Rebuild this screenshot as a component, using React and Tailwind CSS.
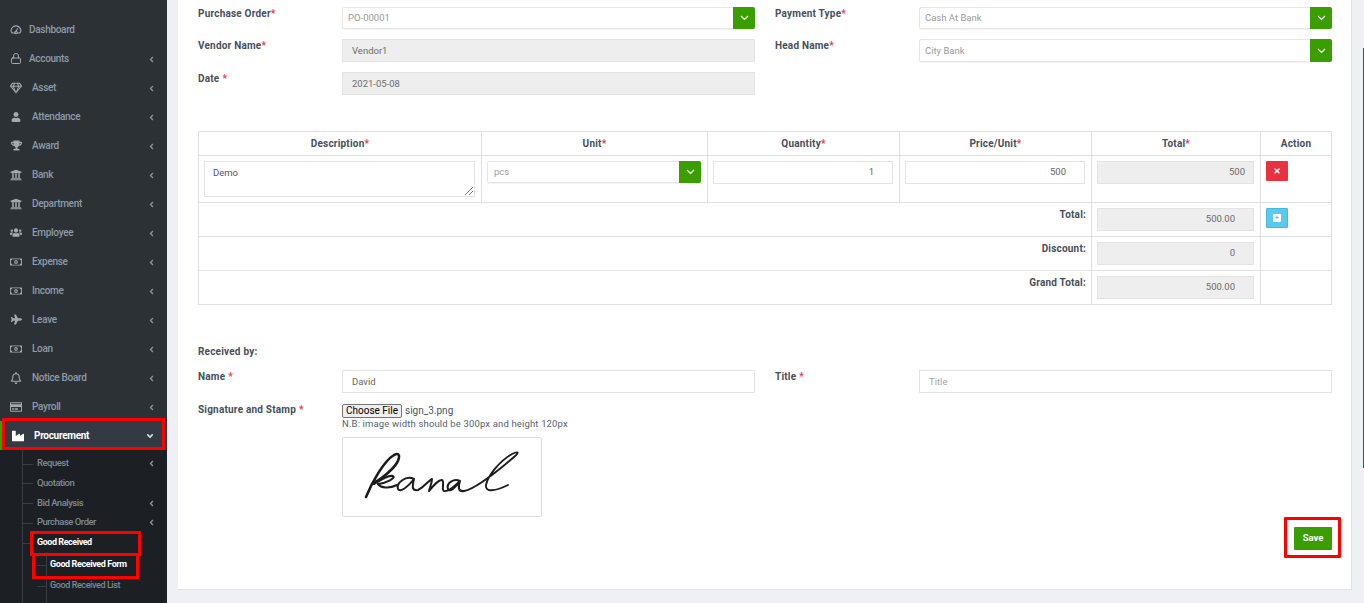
import React from "react";
import { FaRegGem, FaUser, FaTrophy, FaUniversity, FaUsers, FaRegMoneyBillAlt, FaPlane, FaRegBell, FaRegCreditCard, FaIndustry, FaAngleLeft, FaAngleDown, FaTimes } from "react-icons/fa";
import { LuLock } from "react-icons/lu";

const FONT = "font-['Roboto','Liberation_Sans',sans-serif]";

const Gauge = ({ size }) => (
  <svg width={size} height={size} viewBox="0 0 14 14" fill="none" stroke="currentColor" strokeWidth="1.3" strokeLinecap="round">
    <path d="M2.5 10.5C.6 8.6 1 5.2 3.2 3.6 5.4 2 8.8 2.2 10.8 3.8 13 5.6 13.4 8.6 11.5 10.5H8.6M5.4 10.5H2.5" />
    <path d="M6.2 9.6 8.8 5.6M7 11.2a1.4 1.4 0 1 0 0-2.8 1.4 1.4 0 0 0 0 2.8Z" />
  </svg>
);

const menu = [
  ["Dashboard", Gauge, 29, false, 12],
  ["Accounts", LuLock, 29, true, 13],
  ["Asset", FaRegGem, 32, true, 12],
  ["Attendance", FaUser, 32, true, 10],
  ["Award", FaTrophy, 32, true, 11],
  ["Bank", FaUniversity, 32, true, 12],
  ["Department", FaUniversity, 32, true, 12],
  ["Employee", FaUsers, 32, true, 13],
  ["Expense", FaRegMoneyBillAlt, 32, true, 12],
  ["Income", FaRegMoneyBillAlt, 32, true, 12],
  ["Leave", FaPlane, 32, true, 11],
  ["Loan", FaRegMoneyBillAlt, 32, true, 12],
  ["Notice Board", FaRegBell, 32, true, 12],
  ["Payroll", FaRegCreditCard, 32, true, 12],
];

function MenuItem({ label, Icon, textLeft, arrow, size }) {
  return (
    <div className="flex h-[29px] items-center pl-[10px] pr-[11px] text-[10px] font-medium tracking-[-0.3px] text-[#8d9ba8]">
      <span className="flex w-[12px] justify-center text-[#a3a9ae]"><Icon size={size} /></span>
      <span style={{ marginLeft: textLeft - 22 }}>{label}</span>
      {arrow && <FaAngleLeft size={9} className="ml-auto mt-[2px] text-[#8a949c]" />}
    </div>
  );
}

function SubItem({ label, arrow, active, h, nested, box, textCls = "text-[9.5px] tracking-[-0.5px]" }) {
  return (
    <div className={`relative flex items-center ${h} ${nested ? "pl-[50px]" : "pl-[37px]"} pr-[11px] ${textCls} ${active ? "font-bold text-white" : "font-medium text-[#7d8a96]"}`}>
      <span className={`absolute top-1/2 h-px bg-[#383d42] ${nested ? "left-[37px] w-[9px]" : "left-[23px] w-[10px]"}`} />
      {label}
      {arrow && <FaAngleLeft size={9} className="ml-auto text-[#8a949c]" />}
      {box}
    </div>
  );
}

function Sidebar() {
  return (
    <aside className="h-[603px] w-[167px] shrink-0 overflow-hidden bg-[#2c3136]">
      <div className="pt-[15px]">
        {menu.map(([l, I, t, a, s]) => <MenuItem key={l} label={l} Icon={I} textLeft={t} arrow={a} size={s} />)}
      </div>
      <div className="relative flex h-[29px] items-center border-l-[2px] border-[#3aa000] bg-[#343a43] pl-[10px] pr-[12px] text-[10px] font-bold tracking-[-0.3px] text-white">
        <FaIndustry size={12} />
        <span className="ml-[10px]">Procurement</span>
        <FaAngleDown size={10} className="ml-auto text-[#d8dde0]" />
        <span className="absolute -top-[3px] left-0 h-[32px] w-[163px] border-[3px] border-[#ff0000]" />
      </div>
      <div className="relative h-[153px] bg-[#1c2024] pt-[4px]">
        <span className="absolute bottom-0 left-[22px] top-0 w-px bg-[#383d42]" />
        <span className="absolute bottom-0 left-[46px] top-[102px] w-px bg-[#383d42]" />
        <SubItem label="Request" arrow h="h-[19px]" />
        <SubItem label="Quotation" h="h-[20px]" />
        <SubItem label="Bid Analysis" arrow h="h-[20px]" />
        <SubItem label="Purchase Order" arrow h="h-[19px]" />
        <SubItem label="Good Received" active h="h-[21px]" textCls="text-[9px] tracking-[-0.45px]"
          box={<span className="absolute -top-[1px] left-[30px] h-[25px] w-[111px] border-[3px] border-[#ff0000]" />} />
        <SubItem label="Good Received Form" active nested h="h-[24px]" textCls="text-[9px] tracking-[-0.4px]"
          box={<span className="absolute left-[32px] top-0 h-[26px] w-[107px] border-[3px] border-[#ff0000]" />} />
        <SubItem label="Good Received List" nested h="h-[17px]" textCls="text-[9px] tracking-[-0.4px]" />
      </div>
    </aside>
  );
}

const Star = ({ gap }) => <span className={`text-[#e8374a] ${gap ? "ml-[3px]" : ""}`}>*</span>;

function Label({ text, gap, w = "w-[144px]" }) {
  return (
    <div className={`${w} shrink-0 text-[10px] font-bold leading-[14px] tracking-[0.2px] text-[#454f5b]`}>
      {text}<Star gap={gap} />
    </div>
  );
}

function Select({ value, cls = "h-[22px]", textCls = "pl-[5px]" }) {
  return (
    <div className={`flex ${cls} flex-1 items-stretch rounded-[2px] border border-[#e6e6e6] bg-white shadow-[0_1px_1px_rgba(0,0,0,0.05)]`}>
      <span className={`flex flex-1 items-center pt-px ${textCls} text-[9.5px] text-[#9a9a9a]`}>{value}</span>
      <span className="-my-px -mr-px flex w-[22px] items-center justify-center rounded-r-[2px] bg-[#3a9d00] text-white">
        <svg width="9" height="6" viewBox="0 0 9 6" fill="none" stroke="currentColor" strokeWidth="1.2"><path d="M1 1l3.5 3.5L8 1" /></svg>
      </span>
    </div>
  );
}

function Field({ value, disabled, align = "left", cls = "", placeholder }) {
  return (
    <div className={`flex h-[23px] items-center border border-[#e3e3e3] text-[9.5px] ${disabled ? "bg-[#eeeeee] text-[#6b6b6b]" : "bg-white text-[#666]"} ${align === "right" ? "justify-end pr-[18px]" : "pl-[9px] pt-px"} ${cls}`}>
      {value}{placeholder && <span className="text-[#a5a5a5]">{placeholder}</span>}
    </div>
  );
}

const th = "border border-[#dfdfdf] text-center text-[10px] font-bold text-[#454f5b] tracking-[0.2px] align-middle h-[24px] p-0";
const td = "border border-[#dfdfdf] pl-[5px] pr-[6px] pt-[5px] pb-[4px] align-top";

function Table() {
  const sumRow = (label, value, action) => (
    <tr key={label} className="h-[34px]">
      <td colSpan={4} className="border border-[#dfdfdf] pr-[5px] pt-[4px] text-right align-top text-[10px] font-bold tracking-[0.2px] text-[#454f5b]">{label}</td>
      <td className={td}><Field value={value} disabled align="right" cls="h-[23px]" /></td>
      <td className={td}>{action}</td>
    </tr>
  );
  return (
    <table className="mt-[36px] w-[1133px] table-fixed border-collapse">
      <colgroup>
        <col className="w-[283px]" /><col className="w-[226px]" /><col className="w-[192px]" /><col className="w-[192px]" /><col className="w-[169px]" /><col className="w-[71px]" />
      </colgroup>
      <thead>
        <tr>
          {["Description", "Unit", "Quantity", "Price/Unit", "Total"].map((t) => (
            <th key={t} className={th}>{t}<Star /></th>
          ))}
          <th className={th}>Action</th>
        </tr>
      </thead>
      <tbody>
        <tr className="h-[47px]">
          <td className={td}>
            <div className="relative h-[36px] border border-[#e3e3e3] pl-[8px] pt-[4px] text-[9.5px] text-[#555]">
              Demo
              <svg viewBox="0 0 8 8" className="absolute bottom-px right-px h-[8px] w-[8px]" stroke="#555" strokeWidth="0.8"><path d="M0 8 8 0M4 8 8 4" /></svg>
            </div>
          </td>
          <td className={td}><Select value="pcs" textCls="pl-[6px]" /></td>
          <td className={td}><Field value="1" align="right" cls="h-[22px]" /></td>
          <td className={td}><Field value="500" align="right" cls="h-[22px]" /></td>
          <td className={td}><Field value="500" disabled align="right" cls="h-[22px] !pr-[8px]" /></td>
          <td className={td}>
            <span className="flex h-[20px] w-[22px] items-center justify-center rounded-[1px] bg-[#e8323f] text-white"><FaTimes size={8} /></span>
          </td>
        </tr>
        {sumRow("Total:", "500.00", (
          <span className="flex h-[20px] w-[22px] items-center justify-center rounded-[1px] border border-[#46b8da] bg-[#5bc8ee] text-white">
            <span className="flex h-[8px] w-[8px] items-center justify-center rounded-[1px] bg-white text-[7px] font-bold leading-none text-[#5bc8ee]">+</span>
          </span>
        ))}
        {sumRow("Discount:", "0")}
        {sumRow("Grand Total:", "500.00")}
      </tbody>
    </table>
  );
}

function Signature() {
  return (
    <div className="mt-[7px] h-[80px] w-[200px] rounded-[2px] border border-[#dcdcdc] bg-white">
      <svg viewBox="0 0 198 78" className="h-[78px] w-[198px] blur-[0.4px]" fill="none" stroke="#1c1c1c" strokeLinecap="round" strokeLinejoin="round" role="img" aria-label="Signature image">
        <path strokeWidth="2.6" d="M23 59C29 44 41 23 51 17C59 13 57 23 49 31C43 37 35 43 29 46" />
        <path strokeWidth="2.1" d="M31 46C38 42 44 37 50 38C53 40 44 45 35 46C38 50 46 51 54 47" />
        <path strokeWidth="2" d="M71 41C63 37 53 45 55 51C57 55 65 49 71 41C69 49 69 53 75 52C81 49 85 43 89 41C89 45 87 49 86 53C91 47 95 42 99 42C102 43 98 51 101 53C105 54 111 49 117 43C111 40 103 45 105 51C107 55 113 49 117 43C115 49 115 54 121 53" />
        <path strokeWidth="1.9" d="M121 53C133 51 157 31 171 19C177 14 175 13 169 16C157 23 145 37 143 47C142 55 153 53 165 47" />
      </svg>
    </div>
  );
}

export default function App() {
  return (
    <div className={`flex h-[603px] w-[1364px] overflow-hidden bg-[#eef0f6] ${FONT}`}>
      <Sidebar />
      <main className="relative ml-[11px] h-[590px] w-[1174px] shrink-0 border-b border-r border-[#e0e2ec] bg-white pl-[20px] pr-[19px] pt-[7px]">
        <div className="flex gap-[20px]">
          <div className="flex w-[557px] flex-col">
            <div className="flex items-start"><Label text="Purchase Order" /><Select value="PO-00001" /></div>
            <div className="mt-[10px] flex items-start"><Label text="Vendor Name" /><Field value="Vendor1" disabled cls="flex-1" /></div>
            <div className="mt-[10px] flex items-start"><Label text="Date" gap /><Field value="2021-05-08" disabled cls="flex-1" /></div>
          </div>
          <div className="flex w-[557px] flex-col">
            <div className="flex items-start"><Label text="Payment Type" /><Select value="Cash At Bank" /></div>
            <div className="mt-[10px] flex items-start"><Label text="Head Name" /><Select value="City Bank" cls="h-[23px]" /></div>
          </div>
        </div>
        <Table />
        <div className="mt-[41px] text-[10px] font-bold leading-[12px] tracking-[0.2px] text-[#454f5b]">Received by:</div>
        <div className="mt-[12px] flex gap-[20px]">
          <div className="flex w-[557px] items-start"><Label text="Name" gap /><Field value="David" cls="flex-1" /></div>
          <div className="flex w-[557px] items-start"><Label text="Title" gap /><Field placeholder="Title" cls="flex-1" /></div>
        </div>
        <div className="mt-[10px] flex items-start">
          <Label text="Signature and Stamp" gap />
          <div>
            <div className="flex items-center text-[10px] text-[#4a5560]">
              <button className="flex h-[14px] w-[60px] items-center justify-center rounded-[2px] border border-[#767676] bg-[#efefef] text-[10px] text-black">Choose File</button>
              <span className="ml-[3px]">sign_3.png</span>
            </div>
            <div className="text-[9.5px] leading-[12px] tracking-[0.15px] text-[#566270]">N.B: image width should be 300px and height 120px</div>
            <Signature />
          </div>
        </div>
        <div className="absolute bottom-[39px] right-[19px]">
          <button className="relative flex h-[23px] w-[38px] items-center justify-center rounded-[1px] bg-[#3a9d00] text-[9.5px] font-bold text-white">
            Save
            <span className="absolute -left-[10px] -top-[10px] h-[41px] w-[57px] rounded-[1px] border-[3px] border-[#ff0000]" />
          </button>
        </div>
      </main>
      <div className="ml-auto mt-[48px] h-[420px] w-px bg-[#2f5d50]" />
    </div>
  );
}
